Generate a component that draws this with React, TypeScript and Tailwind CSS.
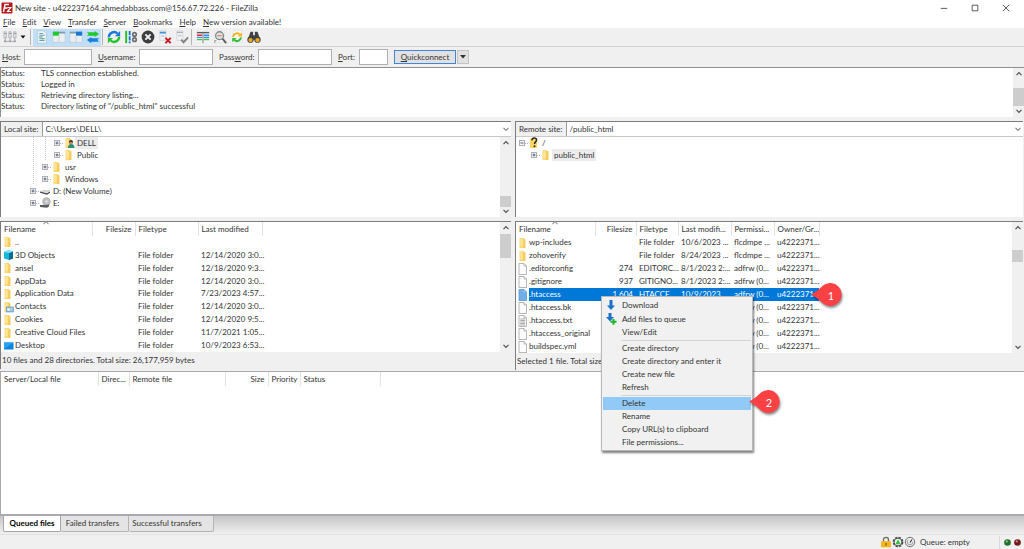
import type { ReactNode } from "react";

/* ---------- icons ---------- */

const Folder = ({ badge }: { badge?: ReactNode }) => (
  <svg viewBox="0 0 12 12" className="h-3 w-3 shrink-0">
    <path d="M2.500 1h4.500v10H2.500z" fill="#fbd976" />
    <path d="M6.500 1.600 8.500 2.400V11H6z" fill="#f5cb5c" />
    <path d="M3.500 2h2v7h-2z" fill="#fde7a2" />
    {badge}
  </svg>
);

const UserFolder = () => (
  <Folder
    badge={
      <g>
        <circle cx="8" cy="5" r="2" fill="#4a3527" />
        <path d="M6.800 5.200h2.600v1.600H6.800z" fill="#d9a679" />
        <path d="M5 11c0-3 1.200-4 3.200-4S11.500 8 11.500 11z" fill="#2f8f72" />
      </g>
    }
  />
);

const ContactsFolder = () => (
  <Folder
    badge={
      <g>
        <rect x="4.500" y="6" width="7" height="5" fill="#8fbfe0" stroke="#5a8fb5" strokeWidth=".6" />
        <path d="M5.500 7.500h2v2h-2zM8.500 7.500h2M8.500 9.200h2" fill="#e8f4fc" stroke="#e8f4fc" strokeWidth=".6" />
      </g>
    }
  />
);

const Cube = () => (
  <svg viewBox="0 0 12 12" className="h-3 w-3 shrink-0">
    <path d="M2 3 6.500 1l4.500 1.500v7L7 11 2 9.500z" fill="#18b5dc" />
    <path d="M7 4 11 2.500v7L7 11z" fill="#0c6c96" />
    <path d="M2 3 6.500 1l4.500 1.500L7 4z" fill="#7be3f5" />
  </svg>
);

const Monitor = () => (
  <svg viewBox="0 0 12 12" className="h-3 w-3 shrink-0">
    <rect x="2" y="2.500" width="9.500" height="7" fill="#0a84dc" />
    <path d="M2 2.500h9.500L2 9z" fill="#28a2f4" />
  </svg>
);

const Page = ({ kind = "plain" }: { kind?: string }) => (
  <svg viewBox="0 0 12 12" className="h-3 w-3 shrink-0">
    <path
      d="M2 .5h5L9.500 3v8.500H2z"
      fill={kind === "selected" ? "#6fb0e6" : "#fcfcfc"}
      stroke={kind === "selected" ? "#5a9bd3" : "#a4a4a4"}
      strokeWidth=".8"
    />
    <path d="M7 .5V3h2.500" fill="none" stroke={kind === "selected" ? "#8cc2ef" : "#a4a4a4"} strokeWidth=".7" />
    {kind === "text" && <path d="M3.200 4h5M3.200 5.500h5M3.200 7h5M3.200 8.500h5M3.200 10h5" stroke="#8a8a8a" strokeWidth=".7" />}
  </svg>
);

const Disk = () => (
  <svg viewBox="0 0 12 12" className="h-3 w-3 shrink-0">
    <path d="M1 6.500 4 5h7l-1 3z" fill="#d5d5d5" />
    <path d="M1 6.500 8 8.200 11 6.500v1.300L8 9.800 1 7.800z" fill="#4a4a4a" />
  </svg>
);

const DiscDrive = () => (
  <svg viewBox="0 0 12 12" className="h-3 w-3 shrink-0">
    <circle cx="7.500" cy="4.500" r="3.800" fill="#bfc3c6" stroke="#8c8c8c" strokeWidth=".5" />
    <circle cx="7.500" cy="4.500" r="1" fill="#f4f4f4" />
    <path d="M1 8h7l2-.8v2L8 10.800 1 10z" fill="#5c5c5c" />
  </svg>
);

const UnknownFolder = () => (
  <svg viewBox="0 0 12 12" className="h-3 w-3 shrink-0">
    <path d="M2 1.500h7V11H2z" fill="#fbd766" />
    <path d="M3.800 3.300C4 1.700 5 1 6.200 1c1.500 0 2.400.9 2.400 2.100C8.600 4.800 6.500 5 6.500 7" fill="none" stroke="#2e2b20" strokeWidth="1.500" />
    <circle cx="6.500" cy="9.200" r="1" fill="#2e2b20" />
  </svg>
);

const Expander = ({ open = false }: { open?: boolean }) => (
  <svg viewBox="0 0 12 12" className="h-3 w-3 shrink-0">
    <path d="M9 6.500h3" stroke="#b5b5b5" strokeDasharray="1 1" />
    <rect x="3.500" y="3.500" width="5" height="5" fill="#f8f8f8" stroke="#b0b0b0" />
    <path d={open ? "M4.500 6h3" : "M4.500 6h3M6 4.500v3"} stroke="#3d4f86" strokeWidth=".9" />
  </svg>
);

const Guide = ({ on = true }: { on?: boolean }) => (
  <svg viewBox="0 0 12 12" className="h-3 w-3 shrink-0">
    {on && <path d="M6.500 0v12" stroke="#c8c8c8" strokeDasharray="1 1" />}
  </svg>
);

const Chevron = ({ up = false, tone = "#505050" }: { up?: boolean; tone?: string }) => (
  <svg viewBox="0 0 8 8" className="h-2 w-2">
    <path d={up ? "M1.500 5.200 4 2.700l2.500 2.500" : "M1.500 2.800 4 5.300l2.500-2.500"} fill="none" stroke={tone} strokeWidth="1.200" />
  </svg>
);

const Icon = ({ children }: { children: ReactNode }) => (
  <svg viewBox="0 0 16 16" className="h-[14px] w-[14px]">
    {children}
  </svg>
);

const Logo = () => (
  <svg viewBox="0 0 12 12" className="h-3 w-3 shrink-0">
    <rect x=".5" y=".5" width="11" height="11" rx="1" fill="#b4161b" />
    <path d="M2.500 10 4 2.500h4M3.200 6H6.500" fill="none" stroke="#fff" strokeWidth="1.400" />
    <path d="M6.300 5.500h3.500L6.500 9.500h3.700" fill="none" stroke="#fff" strokeWidth="1.200" />
  </svg>
);

const icons = {
  sites: (
    <Icon>
      <path d="M1 2h3v7H1zM6.500 2h3v7h-3zM12 2h3v7h-3z" fill="#dadde0" stroke="#a5a9ad" strokeWidth=".7" />
      <path d="M1.500 4H4M7 4h2.500M12.500 4H15" stroke="#7d8286" strokeWidth=".8" />
      <path d="M2.500 9v4M8 9v4M13.500 9v4M1 13h14" fill="none" stroke="#9b9fa3" />
      <path d="M1.500 12h2v2h-2zM7 12h2v2H7zM12.500 12h2v2h-2z" fill="#9aa0a5" />
    </Icon>
  ),
  log: (
    <Icon>
      <path d="M3 1h7l3 3v11H3z" fill="#e9f3f8" stroke="#a9bfcc" strokeWidth=".7" />
      <path d="M5 4h4M5 6h6M5 10h4M5 12h6" stroke="#5f93a8" />
      <path d="M4.500 8h4M8 10h3" stroke="#4aa46c" strokeWidth="1.200" />
    </Icon>
  ),
  localTree: (
    <Icon>
      <path d="M1 2h14v12H1z" fill="#eceff1" stroke="#b4c0c8" strokeWidth=".6" />
      <path d="M1 2h14v2H1z" fill="#7f9db5" />
      <path d="M1 2h7v4.500H1z" fill="#1fca2b" />
      <path d="M8 5v9" stroke="#c3cdd4" />
    </Icon>
  ),
  remoteTree: (
    <Icon>
      <path d="M1 2h14v12H1z" fill="#eceff1" stroke="#b4c0c8" strokeWidth=".6" />
      <path d="M1 2h14v2H1z" fill="#7f9db5" />
      <path d="M8 2h7v4.500H8z" fill="#1878d6" />
      <path d="M8 7v7" stroke="#c3cdd4" />
    </Icon>
  ),
  queue: (
    <Icon>
      <path d="M1 2.500h9V1l5 3.700L10 8V6.500H1l2-2z" fill="#21c72e" />
      <path d="M15 9.500H6V8l-5 3.500L6 15v-1.500h9l-2-2z" fill="#1a7fdb" />
    </Icon>
  ),
  refresh: (
    <Icon>
      <path d="M2.200 8.500A5.800 5.800 0 0 1 12 4" fill="none" stroke="#1879d8" strokeWidth="2.700" />
      <path d="M15 1v6H9z" fill="#1879d8" />
      <path d="M13.800 7.500A5.800 5.800 0 0 1 4 12" fill="none" stroke="#22c32d" strokeWidth="2.700" />
      <path d="M1 15V9h6z" fill="#22c32d" />
    </Icon>
  ),
  process: (
    <Icon>
      <path d="M2.500 1v14" stroke="#1fbf2b" strokeWidth="2.200" />
      <path d="M6.500 1v14" stroke="#1a78d2" strokeWidth="2.200" strokeDasharray="5 1" />
      <circle cx="12" cy="5" r="2" fill="none" stroke="#6b6e71" strokeWidth="1.900" />
      <circle cx="12" cy="11" r="2" fill="none" stroke="#6b6e71" strokeWidth="1.900" />
    </Icon>
  ),
  cancel: (
    <Icon>
      <circle cx="8" cy="8" r="7.300" fill="#3b3d3f" />
      <path d="m5 5 6 6M11 5l-6 6" stroke="#f4f4f4" strokeWidth="2.200" />
    </Icon>
  ),
  disconnect: (
    <Icon>
      <path d="M2 1h7v11H2z" fill="#eef0f2" stroke="#c5cacf" strokeWidth=".6" />
      <path d="M2 2h7v2H2z" fill="#3c94de" />
      <path d="M3.500 7h4" stroke="#b4babf" />
      <path d="m8.500 9 6 6M14.500 9l-6 6" stroke="#c8161d" strokeWidth="2.300" />
    </Icon>
  ),
  reconnect: (
    <Icon>
      <path d="M2 1h7v11H2z" fill="#eef0f2" stroke="#c5cacf" strokeWidth=".6" />
      <path d="M2 2h7v1.500H2z" fill="#aeb3b7" />
      <path d="M3.500 6.500h4" stroke="#b4babf" />
      <path d="m7 11 2.800 3L15 8.500" fill="none" stroke="#7f8386" strokeWidth="2.200" />
    </Icon>
  ),
  filter: (
    <Icon>
      <path d="M1 2h14v12H1z" fill="#f4f4f4" />
      <path d="M1 3h14" stroke="#55595d" strokeWidth="1.600" />
      <path d="M1 6h6" stroke="#e0343c" strokeWidth="1.800" />
      <path d="M1 8.500h6" stroke="#3f8fdc" strokeWidth="1.500" />
      <path d="M9 6h6M9 8.500h6" stroke="#2f8fe8" strokeWidth="1.800" />
      <path d="M1 11h6M9 11h6" stroke="#3bc54a" strokeWidth="1.500" />
      <path d="M8 3v12" stroke="#8c9094" strokeWidth="1.300" />
    </Icon>
  ),
  compare: (
    <Icon>
      <path d="M2 1h11v13H2z" fill="#f9f9f9" stroke="#dadada" strokeWidth=".6" />
      <circle cx="7.500" cy="6.500" r="4.500" fill="#d9e6dd" stroke="#85898c" strokeWidth="1.500" />
      <path d="M5 6.500h5" stroke="#e0785f" strokeWidth="1.300" />
      <path d="m11 10 4 5" stroke="#5a5d60" strokeWidth="2.200" />
      <path d="M2 15v-3h2" fill="none" stroke="#8d9194" />
    </Icon>
  ),
  sync: (
    <Icon>
      <path d="M4 1h10v13H4z" fill="#fafafa" stroke="#dcdcdc" strokeWidth=".6" />
      <path d="M3.500 8A4.500 4.500 0 0 1 11 5" fill="none" stroke="#f2b219" strokeWidth="2.300" />
      <path d="M13.500 2.500v5h-5z" fill="#f2b219" />
      <path d="M12.500 8.500A4.500 4.500 0 0 1 5 11.500" fill="none" stroke="#35bd3d" strokeWidth="2.300" />
      <path d="M2.500 14V9h5z" fill="#35bd3d" />
    </Icon>
  ),
  find: (
    <Icon>
      <path d="M4 2h3v4h2V2h3l2.500 7H9.500v2h-3V9h-5z" fill="#3f4144" />
      <circle cx="4" cy="11" r="3.600" fill="#3f4144" />
      <circle cx="12" cy="11" r="3.600" fill="#3f4144" />
      <circle cx="4" cy="11.500" r="2.500" fill="#e8a81f" />
      <circle cx="12" cy="11.500" r="2.500" fill="#e8a81f" />
    </Icon>
  ),
};

/* ---------- shared parts ---------- */

const ToolButton = ({ icon, label, on = false }: { icon: ReactNode; label: string; on?: boolean }) => (
  <button
    type="button"
    aria-label={label}
    className={`flex h-[17px] w-[17px] items-center justify-center ${on ? "bg-[#bfdff8]" : ""}`}
  >
    {icon}
  </button>
);

const Scrollbar = ({ thumb }: { thumb: string }) => (
  <div className="flex w-[11px] shrink-0 flex-col items-center justify-between bg-[#f0f0f0] py-[2px]">
    <Chevron up />
    <div className={`flex w-full flex-1 flex-col ${thumb}`}>
      <div className="w-full bg-[#cdcdcd] [height:var(--thumb)]" />
    </div>
    <Chevron />
  </div>
);

const Field = ({ id, text, hot, label, box }: { id: string; text: string[]; hot: string; label: string; box: string }) => (
  <div className="flex items-center">
    <label htmlFor={id} className={label}>
      {text[0]}
      <u>{hot}</u>
      {text[1]}
    </label>
    <input id={id} type="text" className={`h-4 border border-[#b0b0b0] bg-white px-1 outline-none ${box}`} />
  </div>
);

const SiteBar = ({ id, label, path }: { id: string; label: string; path: string }) => (
  <div className="flex h-[15px] items-stretch border-b border-[#c8c8c8] bg-[#f0f0f0]">
    <label htmlFor={id} className="flex items-center border-r border-[#9a9a9a] px-[3px]">
      {label}
    </label>
    <div className="relative flex flex-1 bg-white">
      <select id={id} className="w-full appearance-none bg-white pl-[3px] outline-none">
        <option>{path}</option>
      </select>
      <span className="pointer-events-none absolute top-[3px] right-[1px]">
        <Chevron tone="#8a8a8a" />
      </span>
    </div>
  </div>
);

const TreeRow = ({ depth, guides, icon, name, selected = false, open = false }: {
  depth: number;
  guides: boolean[];
  icon: ReactNode;
  name: string;
  selected?: boolean;
  open?: boolean;
}) => (
  <li className="flex h-3 items-center">
    {Array.from({ length: depth }, (_, i) => (
      <Guide key={i} on={guides[i]} />
    ))}
    <Expander open={open} />
    {icon}
    <span className={`px-[2px] leading-3 ${selected ? "bg-[#ececec]" : ""}`}>{name}</span>
  </li>
);

type Column = { title: string; width: string; right?: boolean };

const HeaderRow = ({ columns, sorted = true }: { columns: Column[]; sorted?: boolean }) => (
  <thead>
    <tr className="h-[14px]">
      {columns.map((c, i) => (
        <th
          key={c.title}
          scope="col"
          className={`relative border-r border-[#e3e3e3] px-[3px] font-normal whitespace-nowrap ${c.right ? "text-right" : "text-left"}`}
        >
          {c.title}
          {sorted && i === 0 && (
            <span className="absolute -top-[3px] left-1/2 -translate-x-1/2">
              <Chevron up tone="#9a9a9a" />
            </span>
          )}
        </th>
      ))}
      <th aria-hidden="true" />
    </tr>
  </thead>
);

const Cols = ({ columns }: { columns: Column[] }) => (
  <colgroup>
    {columns.map((c) => (
      <col key={c.title} className={c.width} />
    ))}
    <col />
  </colgroup>
);

/* ---------- data ---------- */

const menus = [
  ["F", "ile"],
  ["E", "dit"],
  ["V", "iew"],
  ["T", "ransfer"],
  ["S", "erver"],
  ["B", "ookmarks"],
  ["H", "elp"],
  ["N", "ew version available!"],
];

const log = [
  "TLS connection established.",
  "Logged in",
  "Retrieving directory listing...",
  'Directory listing of "/public_html" successful',
];

const localColumns: Column[] = [
  { title: "Filename", width: "w-[91px]" },
  { title: "Filesize", width: "w-[43px]", right: true },
  { title: "Filetype", width: "w-[63px]" },
  { title: "Last modified", width: "w-[64px]" },
];

const localFiles: { icon: ReactNode; name: string; date: string }[] = [
  { icon: <Folder />, name: "..", date: "" },
  { icon: <Cube />, name: "3D Objects", date: "12/14/2020 3:0..." },
  { icon: <Folder />, name: "ansel", date: "12/18/2020 9:3..." },
  { icon: <Folder />, name: "AppData", date: "12/14/2020 3:0..." },
  { icon: <Folder />, name: "Application Data", date: "7/23/2023 4:57..." },
  { icon: <ContactsFolder />, name: "Contacts", date: "12/14/2020 3:0..." },
  { icon: <Folder />, name: "Cookies", date: "12/14/2020 9:5..." },
  { icon: <Folder />, name: "Creative Cloud Files", date: "11/7/2021 1:05..." },
  { icon: <Monitor />, name: "Desktop", date: "10/9/2023 6:53..." },
];

const remoteColumns: Column[] = [
  { title: "Filename", width: "w-[79px]" },
  { title: "Filesize", width: "w-[41px]", right: true },
  { title: "Filetype", width: "w-[42px]" },
  { title: "Last modifi...", width: "w-[53px]" },
  { title: "Permissi...", width: "w-[43px]" },
  { title: "Owner/Gr...", width: "w-[45px]" },
];

const remoteFiles: { icon: ReactNode; cells: string[]; selected?: boolean }[] = [
  { icon: <Folder />, cells: ["wp-includes", "", "File folder", "10/6/2023 ...", "flcdmpe ...", "u4222371..."] },
  { icon: <Folder />, cells: ["zohoverify", "", "File folder", "8/24/2023 ...", "flcdmpe ...", "u4222371..."] },
  { icon: <Page />, cells: [".editorconfig", "274", "EDITORC...", "8/1/2023 2:...", "adfrw (0...", "u4222371..."] },
  { icon: <Page />, cells: [".gitignore", "937", "GITIGNO...", "8/1/2023 2:...", "adfrw (0...", "u4222371..."] },
  { icon: <Page kind="selected" />, cells: [".htaccess", "1,604", "HTACCE...", "10/9/2023 ...", "adfrw (0...", "u4222371..."], selected: true },
  { icon: <Page />, cells: [".htaccess.bk", "", "", "", "adfrw (0...", "u4222371..."] },
  { icon: <Page kind="text" />, cells: [".htaccess.txt", "", "", "", "adfrw (0...", "u4222371..."] },
  { icon: <Page />, cells: [".htaccess_original", "", "", "", "adfrw (0...", "u4222371..."] },
  { icon: <Page />, cells: ["buildspec.yml", "", "", "", "adfrw (0...", "u4222371..."] },
];

const queueColumns: Column[] = [
  { title: "Server/Local file", width: "w-[97px]" },
  { title: "Direc...", width: "w-[31px]" },
  { title: "Remote file", width: "w-[96px]" },
  { title: "Size", width: "w-[43px]", right: true },
  { title: "Priority", width: "w-[32px]" },
  { title: "Status", width: "w-[80px]" },
];

/* ---------- context menu ---------- */

const Pin = ({ n, place }: { n: number; place: string }) => (
  <div className={`absolute z-20 ${place}`}>
    <svg viewBox="0 0 34 26" className="h-[26px] w-[34px] drop-shadow-[1px_2px_1px_rgba(0,0,0,0.45)]">
      <path d="M0 12.500C5 10 9 6.500 12 3.500A11.500 11.500 0 1 1 12 21.500C9 18.500 5 15 0 12.500z" fill="#fb4144" />
    </svg>
    <span className="absolute inset-y-0 right-0 flex w-[28px] items-center justify-center text-[11px] text-white">{n}</span>
  </div>
);

const MenuItem = ({ label, icon, tall = false, active = false }: { label: string; icon?: ReactNode; tall?: boolean; active?: boolean }) => (
  <button
    type="button"
    role="menuitem"
    className={`relative flex items-center text-left whitespace-nowrap ${tall ? "h-[14px]" : "h-[13px]"} ${active ? "bg-[#91c9f7]" : ""}`}
  >
    <span className="flex w-[19px] justify-center pr-[4px]">{icon}</span>
    {label}
    {active && <Pin n={2} place="-top-2 left-[146px]" />}
  </button>
);

const Separator = () => <div role="separator" className="my-[1px] ml-[18px] h-[1px] bg-[#d4d4d4]" />;

const ContextMenu = () => (
  <div
    role="menu"
    className="absolute top-[74px] left-[85px] z-10 flex w-[152px] flex-col border border-[#b9b9b9] bg-[#f1f1f1] p-[1px] shadow-[1px_2px_2px_rgba(0,0,0,0.5)]"
  >
    <MenuItem
      tall
      label="Download"
      icon={
        <svg viewBox="0 0 12 12" className="h-3 w-3">
          <path d="M4.500 1h3v5.500H10L6 11 2 6.500h2.500z" fill="#1c71c9" />
        </svg>
      }
    />
    <MenuItem
      tall
      label="Add files to queue"
      icon={
        <svg viewBox="0 0 12 12" className="h-3 w-3">
          <path d="M3.500 0h3v4H9L5 8.500 1 4h2.500z" fill="#1c71c9" />
          <path d="M7.500 6h2v1.800h2v2h-2v2h-2v-2h-2v-2h2z" fill="#1fb52b" />
        </svg>
      }
    />
    <MenuItem label="View/Edit" />
    <Separator />
    <MenuItem label="Create directory" />
    <MenuItem label="Create directory and enter it" />
    <MenuItem label="Create new file" />
    <MenuItem label="Refresh" />
    <Separator />
    <MenuItem label="Delete" active />
    <MenuItem label="Rename" />
    <MenuItem label="Copy URL(s) to clipboard" />
    <MenuItem label="File permissions..." />
  </div>
);

/* ---------- page ---------- */

const pane = "border-t border-l border-[#7c7c7c]";

export default function App() {
  return (
    <div className="flex min-h-screen flex-col bg-[#f0f0f0] font-['Lato','Open_Sans',sans-serif] text-[8px] leading-[11px] text-[#333]">
      <header className="bg-white">
        <div className="flex h-4 items-center pr-[3px] pl-[1px]">
          <Logo />
          <h1 className="ml-[2px] flex-1">New site - u422237164.ahmedabbass.com@156.67.72.226 - FileZilla</h1>
          <div className="flex text-[#333]">
            {[
              ["Minimize", "M1 5.500h8"],
              ["Maximize", "M1.500 1.500h7v7h-7z"],
              ["Close", "m1 1 8 8M9 1 1 9"],
            ].map(([name, d]) => (
              <button key={name} type="button" aria-label={name} className="flex h-4 w-[31px] items-center justify-center">
                <svg viewBox="0 0 10 10" className="h-2 w-2">
                  <path d={d} fill="none" stroke="currentColor" />
                </svg>
              </button>
            ))}
          </div>
        </div>
        <nav className="flex h-3 items-center gap-[7px] pl-[3px]">
          {menus.map(([hot, rest]) => (
            <button key={rest} type="button" className="whitespace-nowrap">
              <u>{hot}</u>
              {rest}
            </button>
          ))}
        </nav>
      </header>

      <div className="flex h-[19px] items-center border-b border-[#d2d2d2] pl-[2px]">
        <button type="button" aria-label="Site Manager" className="flex h-[17px] w-4 items-center justify-center">
          {icons.sites}
        </button>
        <button type="button" aria-label="Recent sites" className="flex h-[17px] w-[10px] items-center justify-center">
          <svg viewBox="0 0 6 4" className="h-1 w-[6px]">
            <path d="M.5.5h5L3 3.500z" fill="#111" />
          </svg>
        </button>
        <i className="mx-[2px] h-4 w-[1px] bg-[#b4b4b4]" />
        <ToolButton on label="Toggle message log" icon={icons.log} />
        <ToolButton on label="Toggle local tree" icon={icons.localTree} />
        <ToolButton on label="Toggle remote tree" icon={icons.remoteTree} />
        <ToolButton on label="Toggle transfer queue" icon={icons.queue} />
        <i className="mr-[2px] ml-[1px] h-4 w-[1px] bg-[#b4b4b4]" />
        <ToolButton label="Refresh" icon={icons.refresh} />
        <ToolButton label="Process queue" icon={icons.process} />
        <ToolButton label="Cancel" icon={icons.cancel} />
        <ToolButton label="Disconnect" icon={icons.disconnect} />
        <ToolButton label="Reconnect" icon={icons.reconnect} />
        <i className="mr-[2px] ml-[1px] h-4 w-[1px] bg-[#b4b4b4]" />
        <ToolButton label="Filters" icon={icons.filter} />
        <ToolButton label="Directory comparison" icon={icons.compare} />
        <ToolButton label="Synchronized browsing" icon={icons.sync} />
        <ToolButton label="Find files" icon={icons.find} />
      </div>

      <form className="flex h-5 items-center gap-[6px] pl-[2px]">
        <Field id="host" text={["", "ost:"]} hot="H" label="w-[22px]" box="w-[68px]" />
        <Field id="user" text={["", "sername:"]} hot="U" label="w-[41px]" box="w-[74px]" />
        <Field id="pass" text={["Pass", "ord:"]} hot="w" label="w-[39px]" box="w-[74px]" />
        <Field id="port" text={["", "ort:"]} hot="P" label="w-[21px]" box="w-[29px]" />
        <div className="flex gap-[1px]">
          <button type="button" className="h-[14px] w-[62px] border border-[#3f86d8] bg-[#e1e1e1] leading-3">
            <u>Q</u>uickconnect
          </button>
          <button type="button" aria-label="Quickconnect history" className="flex h-[14px] w-3 items-center justify-center border border-[#c4c4c4] bg-[#e1e1e1]">
            <svg viewBox="0 0 6 4" className="h-1 w-[6px]">
              <path d="M0 0h6L3 3.500z" fill="#333" />
            </svg>
          </button>
        </div>
      </form>

      <section aria-label="Message log" className="flex h-[50px] border-t border-l border-[#8f8f8f] bg-white">
        <ul className="flex-1">
          {log.map((line) => (
            <li key={line} className="flex">
              <span className="w-10">Status:</span>
              {line}
            </li>
          ))}
        </ul>
        <Scrollbar thumb="justify-end pb-[1px] [--thumb:18px]" />
      </section>

      <main className="mt-1 grid grid-cols-[511fr_509fr] gap-[4px]">
        {/* local side */}
        <div className="flex min-w-0 flex-col">
          <section className={pane}>
            <SiteBar id="local" label="Local site:" path="C:\Users\DELL\" />
            <div className="flex h-[80px] bg-white">
              <ul className="flex-1 pl-[26px]">
                <TreeRow depth={2} guides={[true, true]} icon={<UserFolder />} name="DELL" selected />
                <TreeRow depth={2} guides={[true, true]} icon={<Folder />} name="Public" />
                <TreeRow depth={1} guides={[true]} icon={<Folder />} name="usr" />
                <TreeRow depth={1} guides={[true]} icon={<Folder />} name="Windows" />
                <TreeRow depth={0} guides={[]} icon={<Disk />} name="D: (New Volume)" />
                <TreeRow depth={0} guides={[]} icon={<DiscDrive />} name="E:" />
              </ul>
              <Scrollbar thumb="justify-end [--thumb:11px]" />
            </div>
          </section>

          <section className={`mt-1 ${pane}`}>
            <div className="flex bg-white">
              <div className="flex-1">
                <table className="h-[130px] w-full table-fixed border-collapse">
                  <Cols columns={localColumns} />
                  <HeaderRow columns={localColumns} />
                  <tbody>
                    {localFiles.map((f) => (
                      <tr key={f.name}>
                        <td className="p-0">
                          <span className="flex items-center gap-[1px] pl-[1px] whitespace-nowrap">
                            {f.icon}
                            {f.name}
                          </span>
                        </td>
                        <td className="p-0" />
                        <td className="p-0 pl-[3px] whitespace-nowrap">{f.name === ".." ? "" : "File folder"}</td>
                        <td className="p-0 pl-[3px] whitespace-nowrap">{f.date}</td>
                        <td className="p-0" />
                      </tr>
                    ))}
                  </tbody>
                </table>
              </div>
              <Scrollbar thumb="justify-start pt-[2px] [--thumb:24px]" />
            </div>
            <p className="flex h-[17px] items-center bg-[#f0f0f0] pl-[1px]">10 files and 28 directories. Total size: 26,177,959 bytes</p>
          </section>
        </div>

        {/* remote side */}
        <div className="flex min-w-0 flex-col pr-[1px]">
          <section className={pane}>
            <SiteBar id="remote" label="Remote site:" path="/public_html" />
            <ul className="h-[80px] bg-white">
              <TreeRow depth={0} guides={[]} icon={<UnknownFolder />} name="/" open />
              <TreeRow depth={1} guides={[false]} icon={<Folder />} name="public_html" selected />
            </ul>
          </section>

          <section className={`relative mt-1 ${pane}`}>
            <div className="flex bg-white">
              <div className="flex-1">
                <table className="h-[130px] w-full table-fixed border-collapse">
                  <Cols columns={remoteColumns} />
                  <HeaderRow columns={remoteColumns} />
                  <tbody>
                    {remoteFiles.map((f) => (
                      <tr key={f.cells[0]} className={f.selected ? "text-white" : ""}>
                        <td className="p-0">
                          <span className="flex items-center pl-[1px] whitespace-nowrap">
                            {f.icon}
                            <span className={`flex-1 leading-[13px] ${f.selected ? "bg-[#0078d7]" : ""}`}>{f.cells[0]}</span>
                          </span>
                        </td>
                        {f.cells.slice(1).map((text, i) => (
                          <td
                            key={i}
                            className={`p-0 px-[3px] whitespace-nowrap ${i === 0 ? "text-right" : ""} ${f.selected ? "bg-[#0078d7]" : ""}`}
                          >
                            {text}
                          </td>
                        ))}
                        <td className="p-0" />
                      </tr>
                    ))}
                  </tbody>
                </table>
              </div>
              <Scrollbar thumb="justify-start pt-[18px] [--thumb:12px]" />
            </div>
            <p className="flex h-[17px] items-center bg-[#f0f0f0] pl-[1px]">Selected 1 file. Total size</p>
            <ContextMenu />
            <Pin n={1} place="top-[60px] left-[295px]" />
          </section>
        </div>
      </main>

      <section aria-label="Transfer queue" className="mt-[1px] flex-1 border-t border-b-2 border-l border-[#a9a9b0] bg-white">
        <table className="w-full table-fixed border-collapse">
          <Cols columns={queueColumns} />
          <HeaderRow columns={queueColumns} sorted={false} />
        </table>
      </section>

      <div role="tablist" className="flex h-[18px] items-start bg-linear-to-b from-[#c6c6c6] to-[#f0f0f0] pl-[3px]">
        <button type="button" role="tab" aria-selected="true" className="h-4 w-[58px] rounded-b-xs border border-t-0 border-[#a6a6a6] bg-white font-bold whitespace-nowrap text-black">
          Queued files
        </button>
        <button type="button" role="tab" className="h-4 w-[68px] rounded-b-xs border border-t-0 border-l-0 border-[#b4b4b4] bg-[#e4e4e4] pr-1 whitespace-nowrap">
          Failed transfers
        </button>
        <button type="button" role="tab" className="h-4 w-[85px] rounded-b-xs border border-t-0 border-l-0 border-[#b4b4b4] bg-[#e4e4e4] pr-2 whitespace-nowrap">
          Successful transfers
        </button>
      </div>

      <footer className="flex h-[15px] items-center justify-end border-t border-[#e2e2e2] pr-[3px]">
        <div className="flex items-center">
          <svg viewBox="0 0 12 12" className="h-3 w-3">
            <path d="M3.500 6V3.800a2.500 2.500 0 0 1 5 0V6" fill="none" stroke="#6b6b6b" strokeWidth="1.300" />
            <rect x="1" y="5.300" width="10" height="6" rx=".5" fill="#f5b81c" />
            <path d="M6 7v2.500" stroke="#7a5200" strokeWidth="1.200" />
          </svg>
          <svg viewBox="0 0 12 12" className="h-3 w-3">
            <circle cx="6" cy="6" r="4.700" fill="none" stroke="#474a4c" strokeWidth="1.400" strokeDasharray="2.400 1.290" />
            <circle cx="6" cy="6" r="3.900" fill="#f4f4f4" stroke="#474a4c" />
            <path d="M6 3.300 8.500 8.300h-5z" fill="#2fc23a" />
          </svg>
          <svg viewBox="0 0 12 12" className="h-3 w-3">
            <circle cx="6" cy="6" r="4.700" fill="#ededed" stroke="#6f7274" strokeWidth="1" />
            <circle cx="6" cy="6" r="2.800" fill="none" stroke="#9d9fa1" strokeWidth="1" strokeDasharray="11 7" />
            <path d="m6 6.500 2-3" stroke="#333" strokeWidth="1.100" />
          </svg>
          <span className="w-[83px] pl-[4px]">Queue: empty</span>
        </div>
        <i className="mr-[4px] h-[13px] w-[1px] bg-[#dadada]" />
        <div className="flex items-center gap-[3px]">
          <svg viewBox="0 0 8 8" className="h-[7px] w-[7px]">
            <circle cx="4" cy="4" r="3.800" fill="#22702a" />
            <circle cx="3.200" cy="2.800" r="1.300" fill="#7cc483" />
          </svg>
          <svg viewBox="0 0 8 8" className="h-[7px] w-[7px]">
            <circle cx="4" cy="4" r="3.800" fill="#761a1c" />
            <circle cx="3.200" cy="2.800" r="1.300" fill="#c98486" />
          </svg>
        </div>
      </footer>
    </div>
  );
}
